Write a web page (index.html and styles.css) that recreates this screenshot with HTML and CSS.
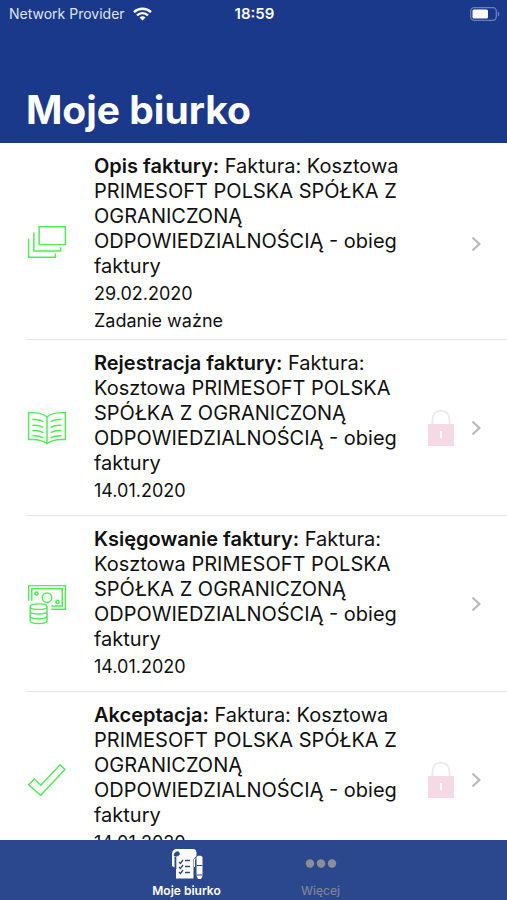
FILE: index.html
```html
<!DOCTYPE html>
<html lang="pl">
<head>
<meta charset="utf-8">
<meta name="viewport" content="width=device-width, initial-scale=1">
<title>Moje biurko</title>
<link rel="stylesheet" href="styles.css">
</head>
<body>
<svg class="defs" aria-hidden="true">
  <symbol id="lock" viewBox="0 0 26 38">
    <path d="M4.500 15V10a8.500 8.500 0 0 1 17 0v5" fill="none" stroke="#f2e8ea" stroke-width="2"/>
    <rect y="15" width="26" height="22" fill="#f5d9e4"/>
    <path d="M13 22v7" stroke="#fff" stroke-width="2"/>
  </symbol>
  <symbol id="chevron" viewBox="0 0 10 16">
    <path d="M1.500 1.500 8.300 8 1.500 14.500" fill="none" stroke="#b9b9bc" stroke-width="2.200"/>
  </symbol>
</svg>
<div class="app">
  <header class="header">
    <div class="status">
      <div class="carrier">
        <span>Network Provider</span>
        <svg class="wifi" viewBox="0 0 19 14" fill="none" stroke="#fff" stroke-width="2.400">
          <path d="M1 5.200a12.300 12.300 0 0 1 17 0M4 8.300a8 8 0 0 1 11 0"/>
          <path d="M6.500 10.600a4.300 4.300 0 0 1 6 0l-3 3z" fill="#fff" stroke="none"/>
        </svg>
      </div>
      <span class="clock">18:59</span>
      <svg class="battery" viewBox="0 0 30 14">
        <rect x=".7" y=".7" width="25.600" height="12.600" rx="3.500" fill="none" stroke="#6c7fb8" stroke-width="1.300"/>
        <rect x="2.500" y="2.500" width="15.500" height="9" rx="1.500" fill="#fff"/>
        <path d="M27.800 4.500c2.200 1 2.200 4 0 5z" fill="#6c7fb8"/>
      </svg>
    </div>
    <h1 class="title">Moje biurko</h1>
  </header>

  <main class="list">
    <a class="row row-tight" href="#">
      <svg class="icon" viewBox="0 0 40 40">
        <path d="M12.500 5.500h25v17h-25zM7.500 11v17.500H33V25M2.500 17v17.500H28V31"/>
      </svg>
      <div class="body">
        <div class="text">
          <p class="name"><b>Opis faktury:</b> Faktura: Kosztowa PRIMESOFT POLSKA SPÓŁKA Z OGRANICZONĄ ODPOWIEDZIALNOŚCIĄ - obieg faktury</p>
          <p class="meta">29.02.2020</p>
          <p class="meta">Zadanie ważne</p>
        </div>
        <svg class="chevron"><use href="#chevron"/></svg>
      </div>
    </a>
    <a class="row" href="#">
      <svg class="icon" viewBox="0 0 40 40">
        <path d="M20 9.500C15 5.500 9 5 2.500 5.500v25.500c7-.5 13 0 17.500 4 4.500-4 10.500-4.500 17.500-4V5.500C31 5 25 5.500 20 9.500zV35"/>
        <path d="M6 12c4-.5 7 0 10.500 2M6 17.500c4-.5 7 0 10.500 2M6 22.500c4-.5 7 0 10.500 2M6 27.500c4-.5 7 0 10.500 2M34 12c-4-.5-7 0-10.500 2M34 17.500c-4-.5-7 0-10.500 2M34 22.500c-4-.5-7 0-10.500 2M34 27.500c-4-.5-7 0-10.500 2"/>
      </svg>
      <div class="body">
        <div class="text">
          <p class="name"><b>Rejestracja faktury:</b> Faktura: Kosztowa PRIMESOFT POLSKA SPÓŁKA Z OGRANICZONĄ ODPOWIEDZIALNOŚCIĄ - obieg faktury</p>
          <p class="meta">14.01.2020</p>
        </div>
        <svg class="lock"><use href="#lock"/></svg>
        <svg class="chevron"><use href="#chevron"/></svg>
      </div>
    </a>
    <a class="row" href="#">
      <svg class="icon" viewBox="0 0 40 40">
        <path d="M2.500 17V2.500h35V25H24M5.500 17V5.500h29V22H24"/>
        <circle cx="20" cy="14" r="4.500"/>
        <circle cx="10" cy="10" r="1.500"/>
        <circle cx="30" cy="18" r="1.500"/>
        <path d="M4 22.500v13.500c0 3.500 16 3.500 16 0V22.500M4 22.500c0-3.500 16-3.500 16 0s-16 3.500-16 0M4 27c0 3.500 16 3.500 16 0M4 31.500c0 3.500 16 3.500 16 0"/>
      </svg>
      <div class="body">
        <div class="text">
          <p class="name"><b>Księgowanie faktury:</b> Faktura: Kosztowa PRIMESOFT POLSKA SPÓŁKA Z OGRANICZONĄ ODPOWIEDZIALNOŚCIĄ - obieg faktury</p>
          <p class="meta">14.01.2020</p>
        </div>
        <svg class="chevron"><use href="#chevron"/></svg>
      </div>
    </a>
    <a class="row" href="#">
      <svg class="icon" viewBox="0 0 40 40">
        <path d="M2.500 24.500 8 19l6 6L32.500 5.500l4.500 4.500L14 34.500z"/>
      </svg>
      <div class="body">
        <div class="text">
          <p class="name"><b>Akceptacja:</b> Faktura: Kosztowa PRIMESOFT POLSKA SPÓŁKA Z OGRANICZONĄ ODPOWIEDZIALNOŚCIĄ - obieg faktury</p>
          <p class="meta">14.01.2020</p>
        </div>
        <svg class="lock"><use href="#lock"/></svg>
        <svg class="chevron"><use href="#chevron"/></svg>
      </div>
    </a>
  </main>

  <nav class="tabs">
    <a class="tab tab-active" href="#">
      <svg class="tab-icon" viewBox="0 0 32 32">
        <path d="M6 1h16c2.500 0 3.500 2 3.500 4v3l-3 3v19.500H5V9H3.500v10.500L1 18V6c0-3 2-5 5-5z" fill="#fff"/>
        <path d="M3 8c0-5 5-5.500 5.500-2.500C8.500 7.500 7 8 5 8zM5 8v13" fill="#2b478d" stroke="#2b478d" stroke-width=".7"/>
        <path d="M8 14l1.500 1.500L12 12M8 19l1.500 1.500L12 17M8 24l1.500 1.500L12 22M14 12.500h5M14 18.500h5M14 24.500h5" fill="none" stroke="#2b478d" stroke-width="1.300"/>
        <path d="M25.500 9.500c0-2.500 6-2.500 6 0V28l-1.500 3h-3l-1.500-3z" fill="#fff"/>
        <path d="M25.500 17.500h6M25.500 27h6" stroke="#2b478d"/>
        <path d="M25 11h-1.500v8" fill="none" stroke="#fff"/>
      </svg>
      <span>Moje biurko</span>
    </a>
    <a class="tab" href="#">
      <svg class="tab-icon" viewBox="0 0 32 32" fill="#8b8f99">
        <circle cx="5" cy="15.500" r="4.200"/><circle cx="16" cy="15.500" r="4.200"/><circle cx="27" cy="15.500" r="4.200"/>
      </svg>
      <span>Więcej</span>
    </a>
  </nav>
</div>
</body>
</html>
```
FILE: styles.css
```css
* {
  box-sizing: border-box;
}

body {
  margin: 0;
  background: #fff;
  color: #111;
  font-family: Inter, "Liberation Sans", sans-serif;
}

h1,
p {
  margin: 0;
}

a {
  color: inherit;
  text-decoration: none;
}

.defs {
  position: absolute;
  width: 0;
  height: 0;
}

.app {
  display: flex;
  flex-direction: column;
  height: 100vh;
}

.header {
  flex: none;
  padding-bottom: 9px;
  background: #1a398b;
  color: #fff;
}

.status {
  display: grid;
  grid-template-columns: 1fr auto 1fr;
  align-items: center;
  height: 27px;
  padding: 0 7px 0 9px;
  font-size: 14px;
}

.carrier {
  display: flex;
  align-items: center;
  gap: 8px;
  color: #dfe5f5;
}

.wifi {
  width: 19px;
  height: 14px;
}

.clock {
  font-size: 15px;
  font-weight: 600;
}

.battery {
  justify-self: end;
  width: 30px;
  height: 14px;
}

.title {
  padding: 59px 26px 0;
  font-size: 39px;
  line-height: 48px;
  font-weight: 700;
}

.list {
  flex: 1;
  min-height: 0;
  overflow-y: auto;
  scrollbar-width: none;
}

.row {
  display: flex;
  align-items: stretch;
  padding-left: 26px;
}

.icon {
  flex: none;
  align-self: center;
  width: 42px;
  height: 42px;
  fill: none;
  stroke: #4fec55;
  stroke-width: 1.4;
}

.body {
  position: relative;
  flex: 1;
  display: flex;
  align-items: center;
  gap: 17px;
  padding: 11px 26px 11px;
  border-bottom: 1px solid #e6e6e8;
}

.body::before {
  content: "";
  position: absolute;
  bottom: -1px;
  left: -42px;
  width: 42px;
  height: 1px;
  background: #e6e6e8;
}

.row-tight .body {
  padding-bottom: 5px;
}

.text {
  flex: 1;
}

.name {
  max-width: 310px;
  margin-bottom: 1px;
  font-size: 20px;
  line-height: 25px;
}

.name b {
  font-weight: 600;
}

.meta {
  font-size: 18px;
  line-height: 27px;
}

.lock {
  flex: none;
  width: 26px;
  height: 38px;
}

.chevron {
  flex: none;
  width: 10px;
  height: 16px;
}

.tabs {
  flex: none;
  display: flex;
  justify-content: center;
  gap: 14px;
  height: 60px;
  padding-top: 8px;
  background: #2b478d;
}

.tab {
  display: flex;
  flex-direction: column;
  align-items: center;
  gap: 3px;
  width: 120px;
  color: #7c8499;
  font-size: 12px;
  line-height: 16px;
  font-weight: 500;
}

.tab-active {
  color: #fff;
  font-weight: 600;
}

.tab-icon {
  width: 32px;
  height: 32px;
}
```
